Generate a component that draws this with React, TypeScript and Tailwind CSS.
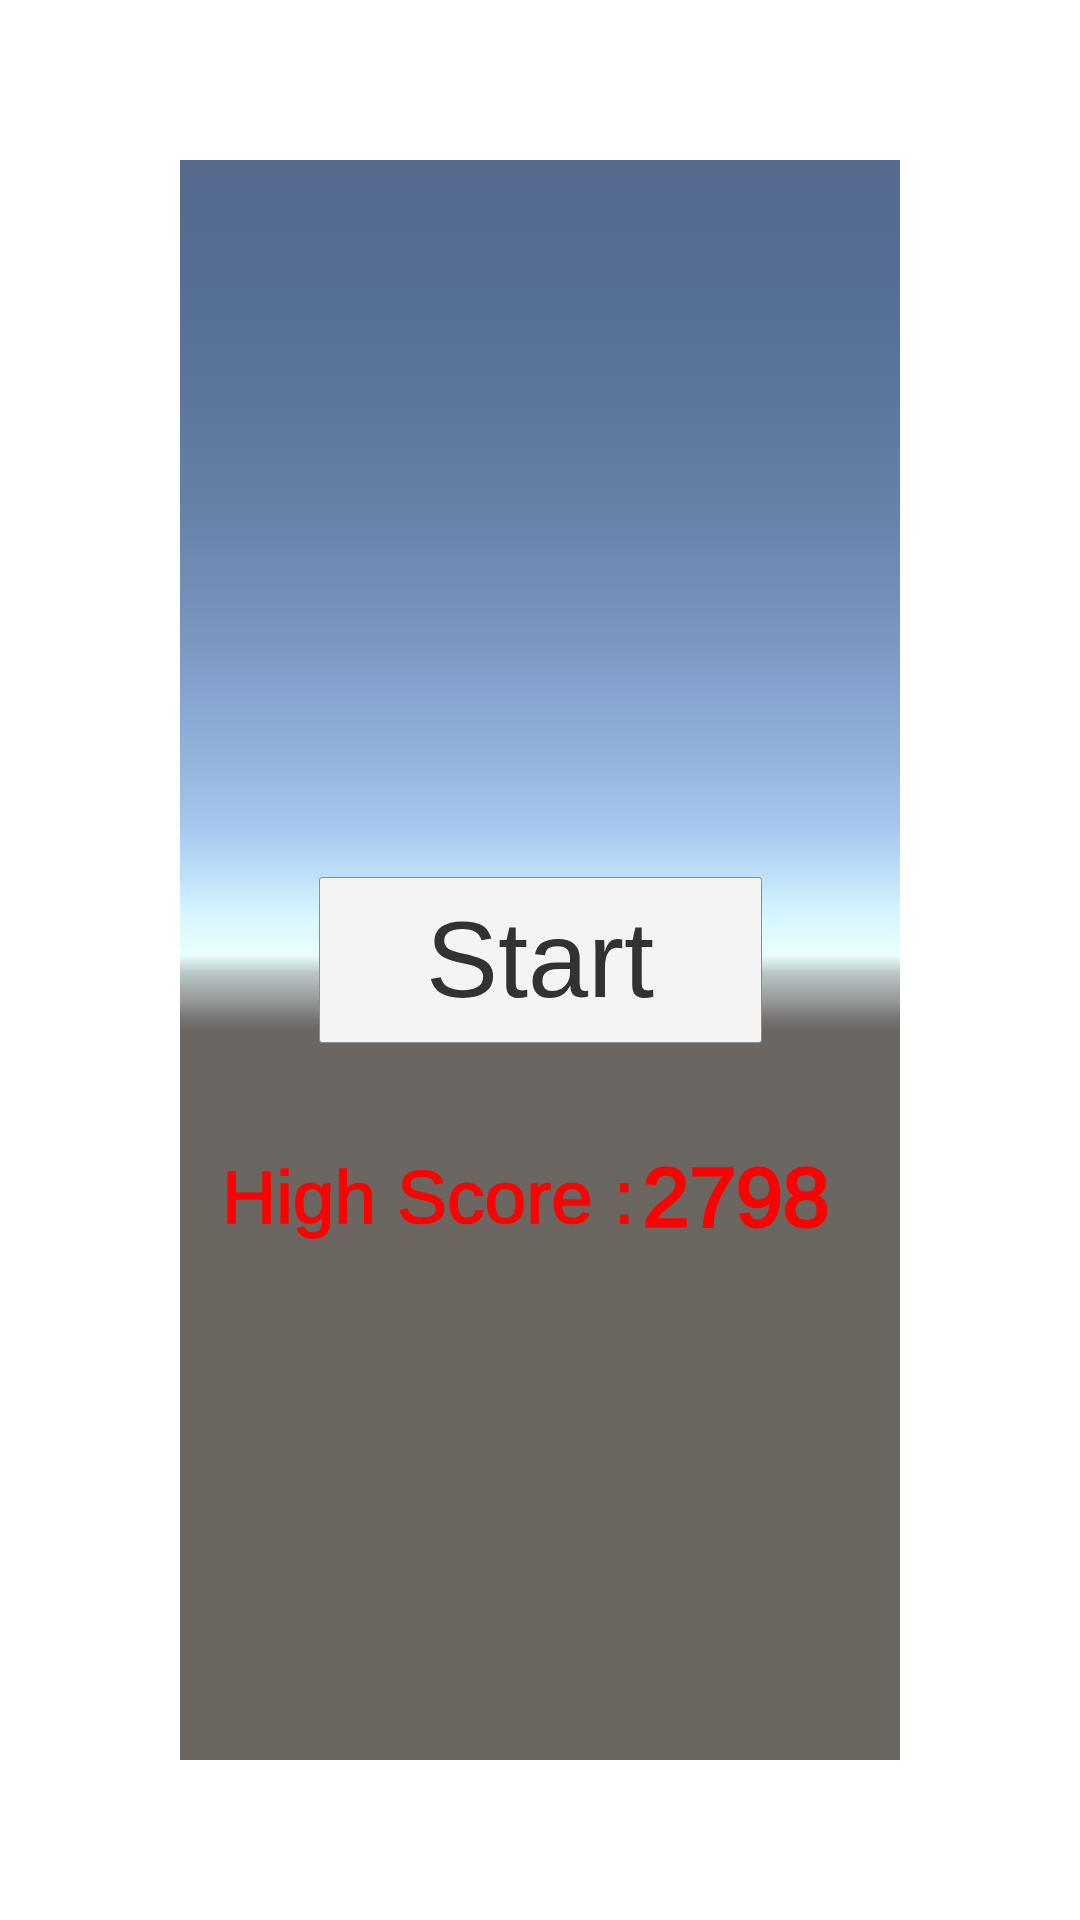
import React from "react";

const FONT = "font-['Liberation_Sans',Arial,sans-serif]";

export default function App() {
  const highScore = 2798;

  return (
    <div className={`w-full h-[1920px] bg-white flex justify-center pt-[160px] ${FONT}`}>
      {/* Game view: skybox gradient down to the horizon, flat ground below */}
      <div className="w-[720px] h-[1600px] flex flex-col items-center bg-[linear-gradient(to_bottom,#546a8e_0%,#566e94_7.5%,#5c769c_15%,#6882aa_22.5%,#7a97c2_30%,#93b3dd_37.5%,#a6c8ee_41.7%,#c0e2fa_45%,#d4f4ff_46.9%,#eaffff_49.7%,#b8c8c8_50.8%,#999a98_52.5%,#767270_53.75%,#6b6661_54.4%,#6b6560_100%)]">
        <button className="mt-[717px] w-[443px] h-[166px] bg-[#f4f4f4] border border-[#8e8e8e] rounded-[3px] flex items-center justify-center text-[108px] leading-none text-[#323232]">
          Start
        </button>

        {/* score label, slightly heavier than the stock regular weight */}
        <div className="mt-[112px] self-start pl-[42px] flex items-baseline text-[#ff0000] leading-none [-webkit-text-stroke:1.5px_#ff0000]">
          <span className="text-[75px] translate-y-[-3px]">High Score :</span>
          <span className="ml-[8px] text-[84px] [-webkit-text-stroke:3px_#ff0000]">{highScore}</span>
        </div>
      </div>
    </div>
  );
}
